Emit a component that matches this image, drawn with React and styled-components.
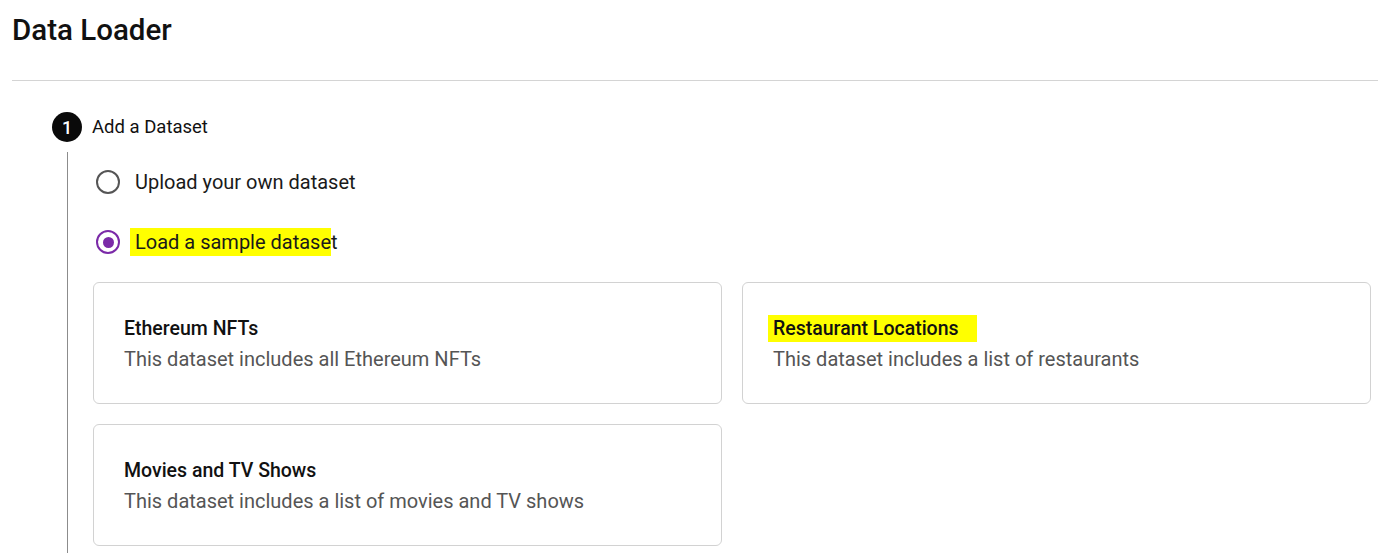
import React from 'react';
import styled, { createGlobalStyle } from 'styled-components';

const GlobalStyle = createGlobalStyle`
  body {
    margin: 0;
    background: #fff;
    font-family: Roboto, "Liberation Sans", sans-serif;
    color: #111;
  }
`;

const Page = styled.div`
  padding-left: 12px;
`;

const Header = styled.header`
  height: 80px;
  border-bottom: 1px solid #d4d4d4;
`;

const Title = styled.h1`
  margin: 0;
  padding-top: 12px;
  font-size: 29.5px;
  font-weight: 500;
  line-height: 36px;
  color: #111;
`;

const Step = styled.section`
  padding: 31px 0 0 40px;
`;

const StepHead = styled.div`
  display: flex;
  align-items: center;
  gap: 10px;
`;

const StepNumber = styled.span`
  width: 30px;
  height: 30px;
  border-radius: 50%;
  background: #0a0a0a;
  color: #fff;
  display: flex;
  align-items: center;
  justify-content: center;
  font-size: 18px;
  font-weight: 500;
`;

const StepLabel = styled.span`
  font-size: 18.5px;
  color: #111;
`;

const StepBody = styled.div`
  margin: 10px 0 0 15px;
  border-left: 1px solid #8c8c8c;
  padding: 12px 8px 8px 25px;
`;

const RadioRow = styled.label`
  display: flex;
  align-items: center;
  gap: 15px;
  height: 36px;
  margin-bottom: 24px;
  padding-left: 3px;
  font-size: 20px;
  color: #1a1a1a;
  cursor: pointer;
`;

const RadioDot = styled.span`
  box-sizing: border-box;
  width: 24px;
  height: 24px;
  border-radius: 50%;
  border: 2.5px solid ${({ checked }) => (checked ? '#7b2aa8' : '#555')};
  display: flex;
  align-items: center;
  justify-content: center;

  &::after {
    content: '';
    width: 11px;
    height: 11px;
    border-radius: 50%;
    background: ${({ checked }) => (checked ? '#7b2aa8' : 'transparent')};
  }
`;

const Highlight = styled.span`
  background: #ffff00;
  padding: 2px ${({ right }) => right || 0}px 2px 5px;
  margin-left: -5px;
`;

const Cards = styled.div`
  display: grid;
  grid-template-columns: 629px 629px;
  gap: 20px;
  margin-top: -2px;
`;

const Card = styled.div`
  box-sizing: border-box;
  height: 122px;
  border: 1px solid #d2d2d2;
  border-radius: 6px;
  padding: 2px 30px 0;
  display: flex;
  flex-direction: column;
  justify-content: center;
`;

const CardTitle = styled.div`
  font-size: 19.5px;
  font-weight: 500;
  line-height: 30px;
  color: #111;
`;

const CardText = styled.div`
  font-size: 20px;
  line-height: 30px;
  color: #555;
`;

const datasets = [
  { title: 'Ethereum NFTs', text: 'This dataset includes all Ethereum NFTs' },
  { title: 'Restaurant Locations', text: 'This dataset includes a list of restaurants', marked: true },
  { title: 'Movies and TV Shows', text: 'This dataset includes a list of movies and TV shows' },
];

const App = () => (
  <Page>
    <GlobalStyle />
    <Header>
      <Title>Data Loader</Title>
    </Header>
    <Step>
      <StepHead>
        <StepNumber>1</StepNumber>
        <StepLabel>Add a Dataset</StepLabel>
      </StepHead>
      <StepBody>
        <RadioRow>
          <RadioDot />
          Upload your own dataset
        </RadioRow>
        <RadioRow>
          <RadioDot checked />
          <span>
            <Highlight>Load a sample datase</Highlight>t
          </span>
        </RadioRow>
        <Cards>
          {datasets.map((d) => (
            <Card key={d.title}>
              <CardTitle>
                {d.marked ? <Highlight right={18}>{d.title}</Highlight> : d.title}
              </CardTitle>
              <CardText>{d.text}</CardText>
            </Card>
          ))}
        </Cards>
      </StepBody>
    </Step>
  </Page>
);

export default App;
